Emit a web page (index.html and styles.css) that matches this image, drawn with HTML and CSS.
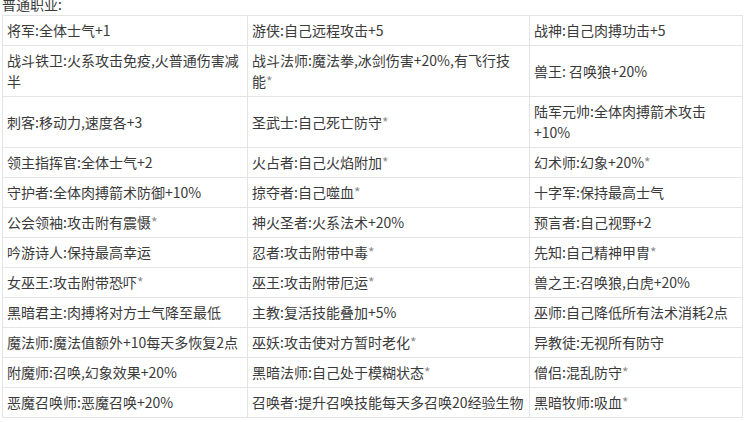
FILE: index.html
```html
<!DOCTYPE html>
<html lang="zh-CN">
<head>
<meta charset="utf-8">
<title>普通职业</title>
<link rel="stylesheet" href="styles.css">
</head>
<body>
<div class="page">
  <p class="title">普通职业:</p>
  <table class="jobs">
    <colgroup>
      <col class="c1">
      <col class="c2">
      <col class="c3">
    </colgroup>
    <tbody>
      <tr><td>将军:全体士气+1</td><td>游侠:自己远程攻击+5</td><td>战神:自己肉搏功击+5</td></tr>
      <tr><td>战斗铁卫:火系攻击免疫,火普通伤害减半</td><td>战斗法师:魔法拳,冰剑伤害+20%,有飞行技<span class="keep">能<span class="star">*</span></span></td><td>兽王: 召唤狼+20%</td></tr>
      <tr><td>刺客:移动力,速度各+3</td><td>圣武士:自己死亡防守<span class="star">*</span></td><td>陆军元帅:全体肉搏箭术攻击+10%</td></tr>
      <tr><td>领主指挥官:全体士气+2</td><td>火占者:自己火焰附加<span class="star">*</span></td><td>幻术师:幻象+20%<span class="star">*</span></td></tr>
      <tr><td>守护者:全体肉搏箭术防御+10%</td><td>掠夺者:自己噬血<span class="star">*</span></td><td>十字军:保持最高士气</td></tr>
      <tr><td>公会领袖:攻击附有震慑<span class="star">*</span></td><td>神火圣者:火系法术+20%</td><td>预言者:自己视野+2</td></tr>
      <tr><td>吟游诗人:保持最高幸运</td><td>忍者:攻击附带中毒<span class="star">*</span></td><td>先知:自己精神甲胄<span class="star">*</span></td></tr>
      <tr><td>女巫王:攻击附带恐吓<span class="star">*</span></td><td>巫王:攻击附带厄运<span class="star">*</span></td><td>兽之王:召唤狼,白虎+20%</td></tr>
      <tr><td>黑暗君主:肉搏将对方士气降至最低</td><td>主教:复活技能叠加+5%</td><td>巫师:自己降低所有法术消耗2点</td></tr>
      <tr><td>魔法师:魔法值额外+10每天多恢复2点</td><td>巫妖:攻击使对方暂时老化<span class="star">*</span></td><td>异教徒:无视所有防守</td></tr>
      <tr><td>附魔师:召唤,幻象效果+20%</td><td>黑暗法师:自己处于模糊状态<span class="star">*</span></td><td>僧侣:混乱防守<span class="star">*</span></td></tr>
      <tr><td>恶魔召唤师:恶魔召唤+20%</td><td>召唤者:提升召唤技能每天多召唤20经验生物</td><td>黑暗牧师:吸血<span class="star">*</span></td></tr>
    </tbody>
  </table>
</div>
</body>
</html>
```

FILE: styles.css
```css
html, body {
  margin: 0;
  padding: 0;
  background: #ffffff;
}

body {
  font-family: "Noto Sans CJK SC", "Microsoft YaHei", sans-serif;
  font-size: 14px;
  color: #3a3a3a;
  overflow: hidden;
}

.page {
  padding-left: 2px;
}

.title {
  margin: -6px 0 0 0;
  line-height: 21px;
  font-size: 14px;
}

.jobs {
  border-collapse: collapse;
  table-layout: fixed;
  width: 740px;
}

.jobs .c1 { width: 245px; }
.jobs .c2 { width: 282px; }
.jobs .c3 { width: 213px; }

.jobs td {
  border: 1px solid #e4e4e4;
  padding: 4px 4px;
  line-height: 21px;
  vertical-align: middle;
  text-align: left;
}

.keep {
  white-space: nowrap;
}

.star {
  color: #8e8e8e;
}
```
